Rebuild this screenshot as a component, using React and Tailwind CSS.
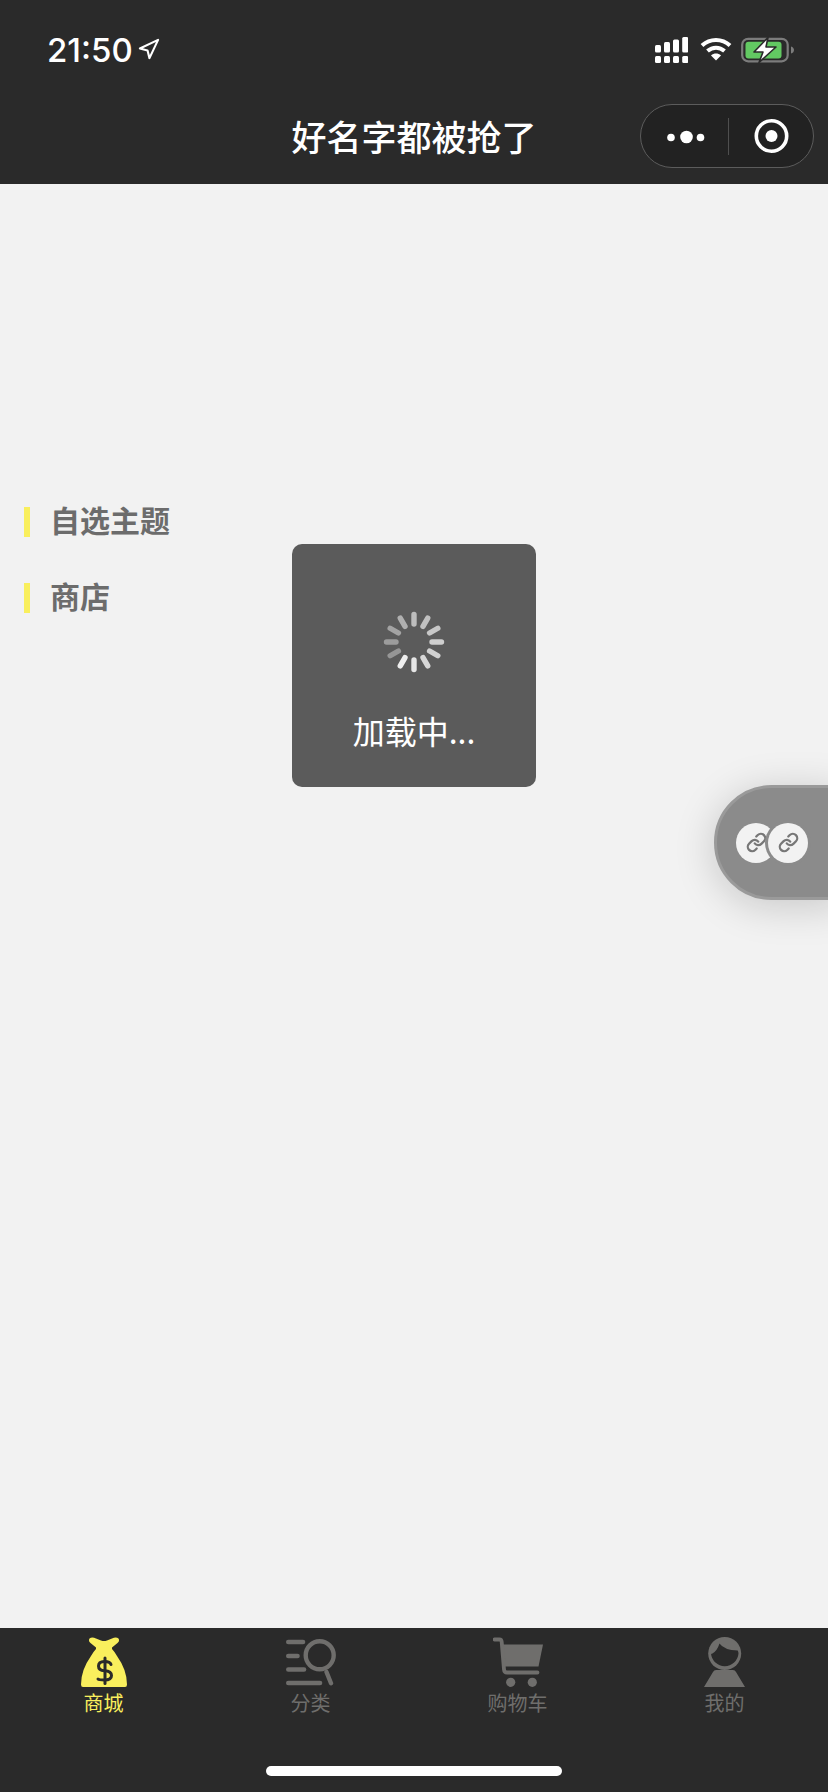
import React from "react";
import { Link, Navigation } from "lucide-react";

const CJK = "font-['Noto_Sans_CJK_SC','Noto_Sans',sans-serif]";

function Signal() {
  const xs = [0, 9, 18, 27.2];
  const tops = [8, 5, 2.5, 0];
  return (
    <svg width="33" height="26" viewBox="0 0 33 26" fill="white">
      {xs.map((x, i) => (
        <g key={i}>
          <rect x={x} y={tops[i]} width="6" height={15.5 - tops[i]} rx="1.5" />
          <rect x={x} y="19" width="6" height="7" rx="1.5" />
        </g>
      ))}
    </svg>
  );
}

function Wifi() {
  return (
    <svg width="32" height="24" viewBox="0 0 32 24" fill="none" stroke="white" strokeWidth="4">
      <path d="M2 8.5C10 1 22 1 30 8.5" />
      <path d="M7.5 14C12.5 9.5 19.5 9.5 24.5 14" />
      <path d="M16 23.5L11 18.4C14 16 18 16 21 18.4Z" fill="white" stroke="none" />
    </svg>
  );
}

function Battery() {
  return (
    <svg width="54" height="26" viewBox="0 0 54 26">
      <rect x="1.2" y="1.8" width="45.5" height="22.5" rx="6" fill="none" stroke="#7c7c7c" strokeWidth="2.2" />
      <rect x="4.5" y="4.8" width="36" height="16.8" rx="3" fill="#62c962" />
      <path d="M50 9.5C52 10 53 11.5 53 13C53 14.5 52 16 50 16.5Z" fill="#7c7c7c" />
      <path d="M27 0.5L13 15H22L18 25.5L35 10H25Z" fill="white" stroke="#2a2a2a" strokeWidth="1.6" strokeLinejoin="round" />
    </svg>
  );
}

function Capsule() {
  return (
    <div className="flex h-[64px] w-[174px] items-center rounded-full border border-[#5c5c5c] bg-[#222222]">
      <svg width="87" height="62" viewBox="0 0 87 62" fill="white" className="shrink-0">
        <circle cx="30" cy="32.5" r="3.8" />
        <circle cx="45.5" cy="32" r="6.3" />
        <circle cx="59.5" cy="32.5" r="3.8" />
      </svg>
      <div className="h-[37px] w-px bg-[#4f4f4f]" />
      <svg width="84" height="62" viewBox="0 0 84 62" fill="none" className="shrink-0">
        <circle cx="42.5" cy="31" r="15.2" stroke="white" strokeWidth="3.6" />
        <circle cx="42.5" cy="31" r="6" fill="white" />
      </svg>
    </div>
  );
}

function Spinner() {
  const op = [0.6, 0.62, 0.66, 0.7, 0.72, 0.76, 0.85, 0.9, 0.36, 0.4, 0.44, 0.52];
  return (
    <svg width="64" height="64" viewBox="0 0 64 64">
      {op.map((o, i) => (
        <line
          key={i}
          x1="32"
          y1="4.5"
          x2="32"
          y2="14"
          stroke="white"
          strokeWidth="5.4"
          strokeLinecap="round"
          opacity={o}
          transform={`rotate(${i * 30} 32 32)`}
        />
      ))}
    </svg>
  );
}

function BagIcon() {
  return (
    <svg width="46" height="50" viewBox="0 0 46 50">
      <path
        d="M8.5 1.5Q11 -0.5 15 1.5L20 3.5Q23 4.5 26 3.5L31 1.5Q35 -0.5 37.5 1.5Q39 4 36.5 6L31 10.5L31 12Q33 14 36 19Q46 33 46 47.5Q46 50 44 50L2 50Q0 50 0 47.5Q0 33 10 19Q13 14 15 12L15 10.5L9.5 6Q7 4 8.5 1.5Z"
        fill="#f9ef5d"
      />
      <g fill="none" stroke="#2a2a2a" strokeWidth="3" strokeLinecap="round">
        <path d="M30 27.5Q29 24.5 23.5 24.5Q17.5 24.5 17.5 29Q17.5 33.5 23.5 33.7Q30.5 34 30.5 38.5Q30.5 43 23.5 43Q18 43 17 42" />
        <path d="M24 21V46.5" />
      </g>
    </svg>
  );
}

function SearchIcon() {
  return (
    <svg width="50" height="47" viewBox="0 0 50 47" fill="none" stroke="#6f6e6c" strokeLinecap="round">
      <g strokeWidth="4.6">
        <path d="M2.3 3H17" />
        <path d="M2.3 17H11.5" />
        <path d="M2.3 30.5H18" />
        <path d="M2.3 44H34" />
      </g>
      <circle cx="33.7" cy="16.3" r="14" strokeWidth="4.4" />
      <path d="M40.5 33L45 44.3" strokeWidth="4.4" />
    </svg>
  );
}

function CartIcon() {
  return (
    <svg width="50" height="50" viewBox="0 0 50 50" fill="#6f6e6c">
      <path d="M10 7.5H50L45.5 29.5H11.5Z" />
      <path d="M1.5 2.5H6.5Q8.5 2.5 8.7 5L11 32.5Q11.3 35.5 14 35.5H44.5" fill="none" stroke="#6f6e6c" strokeWidth="3.8" strokeLinecap="round" />
      <circle cx="17.7" cy="45.3" r="4.6" />
      <circle cx="39.3" cy="45.3" r="4.6" />
    </svg>
  );
}

function PersonIcon() {
  return (
    <svg width="41" height="50" viewBox="0 0 41 50" fill="#6f6e6c">
      <circle cx="20.7" cy="16.5" r="16.5" />
      <path d="M7.7 17Q13 14.5 15.5 6.5Q20 13 33.7 13.5Q34.5 15 34.5 16.5A13.8 13.8 0 0 1 7 16.5Z" fill="#2a2a2a" />
      <path d="M9 35Q10 33 12 33H29Q31 33 32 35L41 50H0Z" />
    </svg>
  );
}

const tabs = [
  { label: "商城", icon: <BagIcon />, color: "text-[#f9ef5d]" },
  { label: "分类", icon: <SearchIcon />, color: "text-[#6f6e6c]" },
  { label: "购物车", icon: <CartIcon />, color: "text-[#6f6e6c]" },
  { label: "我的", icon: <PersonIcon />, color: "text-[#6f6e6c]" },
];

export default function App() {
  return (
    <div className={`relative flex h-[1792px] w-[828px] flex-col overflow-hidden bg-[#f2f2f2] ${CJK}`}>
      <header className="h-[184px] shrink-0 bg-[#2a2a2a] text-white">
        <div className="flex h-[88px] items-start justify-between pt-[37px] pl-[47px] pr-[33px]">
          <div className="flex items-center gap-[4px]">
            <span className="font-['Inter',sans-serif] text-[33px] leading-[26px] font-medium">21:50</span>
            <Navigation size={23} strokeWidth={2.2} className="mt-[-1px]" />
          </div>
          <div className="flex items-start">
            <Signal />
            <div className="ml-[12px]"><Wifi /></div>
            <div className="ml-[9px]"><Battery /></div>
          </div>
        </div>
        <div className="grid h-[96px] grid-cols-[1fr_auto_1fr] items-center pr-[14px]">
          <div />
          <h1 className="mt-[-1px] pl-[14px] text-[35px] leading-[50px] font-medium">好名字都被抢了</h1>
          <div className="justify-self-end"><Capsule /></div>
        </div>
      </header>

      <main className="relative flex-1">
        <div className="flex flex-col gap-[46px] pt-[323px] pl-[24px] text-[30px] leading-[30px] font-bold text-[#6c6c6c]">
          <div className="flex items-center gap-[20px]">
            <span className="h-[30px] w-[6px] bg-[#f9ef5d]" />
            <span className="-translate-y-[3px]">自选主题</span>
          </div>
          <div className="flex items-center gap-[20px]">
            <span className="h-[30px] w-[6px] bg-[#f9ef5d]" />
            <span className="-translate-y-[3px]">商店</span>
          </div>
        </div>

        <div className="absolute left-[292px] top-[360px] flex h-[243px] w-[244px] flex-col items-center rounded-[10px] bg-[#5b5b5b] pt-[66px] text-white">
          <Spinner />
          <div className="mt-[34px] text-[32px] leading-[44px] font-normal">加载中...</div>
        </div>

        <div className="absolute left-[714px] top-[601px] flex h-[115px] w-[130px] items-center rounded-l-full border-[3px] border-[#9a9a9a] bg-[#8b8b8b] pl-[19px] shadow-[0_6px_40px_rgba(0,0,0,0.18)]">
          <div className="flex size-[40px] items-center justify-center rounded-full bg-[#f2f2f2]">
            <Link size={21} strokeWidth={2.6} className="text-[#777777]" />
          </div>
          <div className="relative -ml-[8px] flex size-[40px] items-center justify-center rounded-full bg-[#f2f2f2] ring-[3px] ring-[#8b8b8b]">
            <Link size={21} strokeWidth={2.6} className="text-[#777777]" />
          </div>
        </div>
      </main>

      <nav className="h-[164px] shrink-0 bg-[#2a2a2a] pt-[9px]">
        <div className="grid grid-cols-4">
          {tabs.map((t) => (
            <div key={t.label} className="flex flex-col items-center">
              <div className="flex h-[50px] items-center justify-center">{t.icon}</div>
              <span className={`mt-[3px] text-[20px] leading-[26px] ${t.color}`}>{t.label}</span>
            </div>
          ))}
        </div>
        <div className="mx-auto mt-[50px] h-[10px] w-[296px] rounded-full bg-white" />
      </nav>
    </div>
  );
}
